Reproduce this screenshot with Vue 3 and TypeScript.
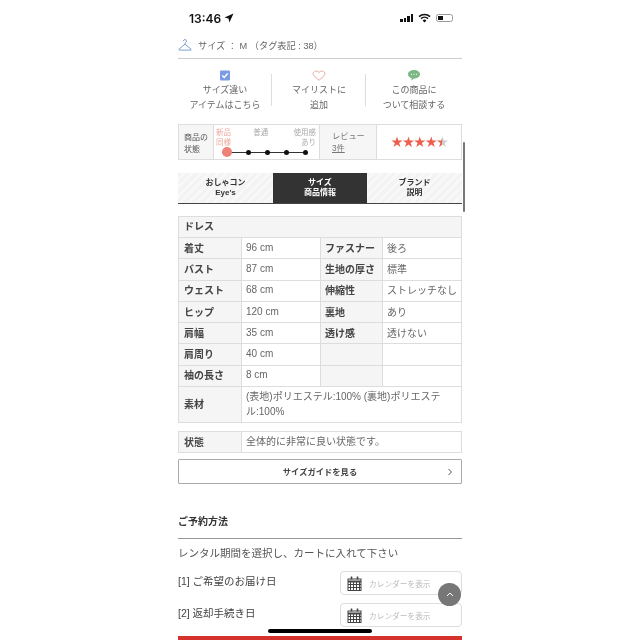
<script setup lang="ts">
const actions = [
  { id: 'check', lines: ['サイズ違い', 'アイテムはこちら'] },
  { id: 'heart', lines: ['マイリストに', '追加'] },
  { id: 'chat', lines: ['この商品に', 'ついて相談する'] },
]

const tabs = [
  { lines: ['おしゃコン', "Eye's"], active: false },
  { lines: ['サイズ', '商品情報'], active: true },
  { lines: ['ブランド', '説明'], active: false },
]

const sizes = [
  ['着丈', '96 cm', 'ファスナー', '後ろ'],
  ['バスト', '87 cm', '生地の厚さ', '標準'],
  ['ウェスト', '68 cm', '伸縮性', 'ストレッチなし'],
  ['ヒップ', '120 cm', '裏地', 'あり'],
  ['肩幅', '35 cm', '透け感', '透けない'],
  ['肩周り', '40 cm', '', ''],
  ['袖の長さ', '8 cm', '', ''],
]

const dates = ['[1] ご希望のお届け日', '[2] 返却手続き日']
const calCols = [3.5, 6.5, 9.5, 12.5]
const calRows = [8, 11]
</script>

<template>
  <div class="page">
    <header class="status">
      <div class="time">
        13:46
        <svg width="10" height="10" viewBox="0 0 10 10"><path d="M9.500.5 .5 4.600l4 .9.9 4z" fill="#111" /></svg>
      </div>
      <div class="status-right">
        <div class="signal"><i></i><i></i><i></i><i></i></div>
        <svg width="13" height="10" viewBox="0 0 13 10">
          <path d="M1 3.600a8 8 0 0 1 11 0M3 5.600a5.200 5.200 0 0 1 7 0" fill="none" stroke="#111" stroke-width="1.500" />
          <path d="M6.500 9.600 4.600 7.400a3 3 0 0 1 3.800 0z" fill="#111" />
        </svg>
        <div class="battery"><span></span></div>
      </div>
    </header>

    <main class="content">
      <div class="size-row">
        <svg width="14" height="14" viewBox="0 0 14 14" fill="none" stroke="#7d9fd0" stroke-width="1">
          <path d="M5.500 3a1.500 1.500 0 1 1 1.900 1.500L7 6.200 1 11.200q-.6.9.4.9h11.200q1 0 .4-.9L7 6.200" />
        </svg>
        <span>サイズ ： M （タグ表記 : 38）</span>
      </div>

      <div class="actions">
        <div v-for="a in actions" :key="a.id" class="action">
          <svg v-if="a.id === 'check'" width="10" height="10" viewBox="0 0 10 10">
            <rect width="10" height="10" rx="1" fill="#7b9ce4" />
            <path d="M2.300 5 4.200 7l3.500-4" fill="none" stroke="#fff" stroke-width="1.400" />
          </svg>
          <svg v-else-if="a.id === 'heart'" width="14" height="11" viewBox="0 0 14 11">
            <path d="M7 10.300 1.800 5.600C-.6 2.800 3.600-1 7 2.500c3.400-3.500 7.600.3 5.200 3.100z" fill="none" stroke="#eba79f" stroke-width="1" />
          </svg>
          <svg v-else width="12" height="11" viewBox="0 0 12 11">
            <path d="M6 0c3.300 0 6 1.800 6 4.200S9.300 8.500 6 8.500L3.500 10.500V8C1.300 7.500 0 6 0 4.200 0 1.800 2.700 0 6 0z" fill="#7cb886" />
            <path d="M3 4.300h1M5.500 4.300h1M8 4.300h1" stroke="#fff" stroke-width="1" />
          </svg>
          <p v-for="line in a.lines" :key="line">{{ line }}</p>
        </div>
      </div>

      <div class="condition">
        <div class="cond-label">商品の<br />状態</div>
        <div class="cond-scale">
          <div class="scale-text">
            <span class="new">新品<br />同様</span>
            <span class="mid">普通</span>
            <span class="used">使用感<br />あり</span>
          </div>
          <div class="track"><b class="first"></b><b></b><b></b><b></b><b></b></div>
        </div>
        <div class="cond-review">レビュー<br /><u>3件</u></div>
        <div class="cond-stars">
          <span>★</span><span>★</span><span>★</span><span>★</span>
          <span class="half">★</span>
        </div>
      </div>

      <nav class="tabs">
        <div v-for="t in tabs" :key="t.lines[0]" class="tab" :class="{ active: t.active }">
          <span v-for="line in t.lines" :key="line">{{ line }}</span>
        </div>
      </nav>

      <div class="sizes">
        <div class="title">ドレス</div>
        <div v-for="row in sizes" :key="row[0]" class="size-line">
          <div class="th">{{ row[0] }}</div>
          <div class="td">{{ row[1] }}</div>
          <div class="th">{{ row[2] }}</div>
          <div class="td">{{ row[3] }}</div>
        </div>
        <div class="size-line material">
          <div class="th">素材</div>
          <div class="td">(表地)ポリエステル:100% (裏地)ポリエステル:100%</div>
        </div>
      </div>

      <div class="sizes state">
        <div class="size-line material">
          <div class="th">状態</div>
          <div class="td">全体的に非常に良い状態です。</div>
        </div>
      </div>

      <div class="guide">
        <span>サイズガイドを見る</span>
        <svg width="6" height="8" viewBox="0 0 6 8"><path d="M1.500 1 4.500 4l-3 3" fill="none" stroke="#555" stroke-width="1" /></svg>
      </div>

      <h3>ご予約方法</h3>
      <p class="lead">レンタル期間を選択し、カートに入れて下さい</p>

      <div v-for="d in dates" :key="d" class="date-row">
        <span class="date-label">{{ d }}</span>
        <div class="date-input">
          <svg width="15" height="15" viewBox="0 0 15 15" fill="none" stroke="#444" stroke-width="1">
            <rect x="1" y="3" width="13" height="11.500" />
            <path d="M1 5.500h13" stroke-width="2" />
            <path v-for="c in calCols" :key="c" :d="`M${c} 5.500v9`" />
            <path v-for="r in calRows" :key="r" :d="`M1 ${r + 0.5}h13`" />
            <path d="M4.500 .5v3M10.500 .5v3" stroke-width="1.600" />
          </svg>
          <span>カレンダーを表示</span>
        </div>
      </div>

      <div class="cart"></div>
    </main>

    <div class="scrollbar"></div>
    <div class="to-top">
      <svg width="8" height="5" viewBox="0 0 8 5"><path d="M1 4 4 1l3 3" fill="none" stroke="#fff" stroke-width="1" /></svg>
    </div>
    <div class="home-bar"></div>
  </div>
</template>

<style>
html,
body {
  margin: 0;
  background: #fff;
  overflow: hidden;
}
</style>

<style scoped>
.page {
  position: relative;
  width: 640px;
  height: 640px;
  overflow: hidden;
  background: #fff;
  color: #555;
  font-family: "Liberation Sans", "Noto Sans CJK JP", sans-serif;
  font-size: 10px;
  filter: blur(0.35px);
}

.status {
  width: 224px;
  height: 35px;
  margin-left: 189px;
  display: flex;
  justify-content: space-between;
  align-items: center;
  padding-top: 1px;
  box-sizing: border-box;
}

.time {
  display: flex;
  align-items: center;
  gap: 3px;
  font-size: 12px;
  color: #111;
  font-family: Inter, "Liberation Sans", sans-serif;
  font-weight: 600;
}

.status-right {
  width: 53px;
  margin-right: -40px;
  display: flex;
  align-items: center;
  gap: 5px;
}

.signal {
  display: flex;
  align-items: flex-end;
  gap: 1px;
  height: 8px;
}

.signal i {
  width: 2.500px;
  background: #111;
}

.signal i:nth-child(1) { height: 3px; }
.signal i:nth-child(2) { height: 4px; }
.signal i:nth-child(3) { height: 6px; }
.signal i:nth-child(4) { height: 8px; }

.battery {
  flex: none;
  width: 17px;
  height: 8px;
  border: 1px solid #999;
  border-radius: 2.500px;
  padding: 1px;
  box-sizing: border-box;
}

.battery span {
  display: block;
  width: 5px;
  height: 100%;
  background: #111;
}

.content {
  width: 284px;
  margin-left: 178px;
}

.size-row {
  height: 19px;
  display: flex;
  align-items: center;
  gap: 6px;
  padding-bottom: 4px;
  border-bottom: 1px solid #ccc;
  color: #666;
  font-size: 9.200px;
}

.actions {
  height: 44px;
  margin-top: 11px;
  display: grid;
  grid-template-columns: 94px 94px 96px;
}

.action {
  position: relative;
  display: flex;
  flex-direction: column;
  align-items: center;
}

.action:not(:last-child)::after {
  content: "";
  position: absolute;
  right: 0;
  top: 4px;
  width: 1px;
  height: 32px;
  background: #ddd;
}

.action svg {
  flex: none;
  height: 11px;
  margin-bottom: 2px;
}

.action p {
  flex: none;
  margin: 0;
  line-height: 14.500px;
  font-size: 9px;
  color: #666;
}

.condition {
  display: grid;
  grid-template-columns: 35px 106px 57px 1fr;
  height: 36px;
  margin-top: 10px;
  border: 1px solid #ddd;
  box-sizing: border-box;
}

.condition > div {
  border-right: 1px solid #ddd;
  box-sizing: border-box;
}

.condition > div:last-child {
  border-right: none;
}

.cond-label {
  background: #f6f6f6;
  padding: 7px 0 0 5px;
  font-size: 8px;
  line-height: 11.500px;
}

.cond-scale {
  position: relative;
  padding: 3px 3px 0 2px;
}

.scale-text {
  display: flex;
  justify-content: space-between;
  font-size: 7.500px;
  line-height: 10px;
  color: #aaa;
}

.new {
  color: #eda99e;
}

.mid {
  margin-right: 3px;
}

.used {
  text-align: right;
}

.track {
  position: absolute;
  left: 8px;
  right: 11px;
  top: 22px;
  height: 10px;
  display: flex;
  align-items: center;
  justify-content: space-between;
  background: linear-gradient(#333, #333) center / 100% 1px no-repeat;
}

.track b {
  width: 5px;
  height: 5px;
  border-radius: 50%;
  background: #111;
}

.track b.first {
  width: 10px;
  height: 10px;
  background: #ee8277;
}

.cond-review {
  background: #f6f6f6;
  padding: 6px 0 0 12px;
  font-size: 8.200px;
  line-height: 12px;
  color: #777;
}

.cond-stars {
  display: flex;
  align-items: center;
  justify-content: center;
  font-size: 14.500px;
  letter-spacing: -1.600px;
  color: #ec5f4e;
  font-family: "DejaVu Sans", sans-serif;
}

.cond-stars span {
  display: block;
}

.half {
  background: linear-gradient(90deg, #ec5f4e 50%, #ccc 50%);
  -webkit-background-clip: text;
  background-clip: text;
  color: transparent;
}

.tabs {
  display: grid;
  grid-template-columns: 95px 94px 95px;
  height: 31px;
  margin-top: 13px;
  border-bottom: 1px solid #444;
  box-sizing: border-box;
}

.tab {
  display: flex;
  flex-direction: column;
  align-items: center;
  justify-content: center;
  padding-bottom: 1px;
  font-size: 8px;
  line-height: 9.500px;
  font-weight: 700;
  color: #333;
  background: repeating-linear-gradient(135deg, #f3f3f3 0 3px, #f8f8f8 3px 6px);
}

.tab.active {
  background: #333;
  color: #fff;
}

.sizes {
  margin-top: 12px;
  border: 1px solid #ddd;
  box-sizing: border-box;
}

.title {
  height: 21px;
  line-height: 19px;
  padding-left: 5px;
  background: #f5f5f5;
  border-bottom: 1px solid #ddd;
  box-sizing: border-box;
  font-weight: 700;
  color: #444;
  font-size: 10px;
}

.size-line {
  display: grid;
  grid-template-columns: 63px 79px 62px 1fr;
  height: 21.300px;
  border-bottom: 1px solid #ddd;
  box-sizing: border-box;
}

.size-line:last-child {
  border-bottom: none;
}

.th,
.td {
  display: flex;
  align-items: center;
  padding: 0 0 2px 4px;
  border-right: 1px solid #ddd;
  box-sizing: border-box;
}

.th:first-child {
  padding-left: 5px;
}

.th {
  background: #f5f5f5;
  font-weight: 700;
  color: #444;
}

.td {
  color: #666;
}

.td:last-child {
  border-right: none;
}

.size-line.material {
  grid-template-columns: 63px 1fr;
  height: 35px;
}

.material .td {
  line-height: 15px;
  padding-right: 15px;
}

.sizes.state {
  margin-top: 8px;
}

.state .size-line.material {
  height: 20px;
}

.guide {
  height: 25px;
  margin-top: 6px;
  padding-bottom: 2px;
  border: 1px solid #aaa;
  border-radius: 1px;
  display: flex;
  align-items: center;
  justify-content: center;
  position: relative;
  box-sizing: border-box;
  font-size: 8.300px;
  font-weight: 700;
  color: #444;
}

.guide svg {
  position: absolute;
  right: 8px;
  top: 8px;
}

h3 {
  margin: 30px 0 0;
  height: 24px;
  line-height: 16px;
  border-bottom: 1px solid #999;
  font-size: 10px;
  font-weight: 700;
  color: #333;
}

.lead {
  margin: 7px 0 0;
  line-height: 14px;
  font-size: 10.500px;
  color: #555;
}

.date-row {
  display: flex;
  align-items: center;
  justify-content: space-between;
  height: 24px;
  margin-top: 8px;
  font-size: 10.500px;
  color: #444;
}

.lead + .date-row {
  margin-top: 11px;
}

.date-label {
  padding-bottom: 5px;
}

.date-input {
  width: 122px;
  height: 24px;
  display: flex;
  align-items: center;
  gap: 7px;
  padding-left: 6px;
  border: 1px solid #ddd;
  border-radius: 4px;
  box-sizing: border-box;
  font-size: 7.700px;
  color: #bbb;
}

.cart {
  height: 12px;
  margin-top: 9px;
  background: #d5322d;
}

.scrollbar {
  position: absolute;
  left: 463px;
  top: 142px;
  width: 2px;
  height: 70px;
  background: #777;
  border-radius: 1px;
}

.to-top {
  position: absolute;
  left: 438px;
  top: 583px;
  width: 23px;
  height: 23px;
  border-radius: 50%;
  background: #777;
  display: flex;
  align-items: center;
  justify-content: center;
}

.home-bar {
  position: absolute;
  left: 268px;
  top: 629px;
  width: 104px;
  height: 4px;
  border-radius: 2px;
  background: #000;
}
</style>
